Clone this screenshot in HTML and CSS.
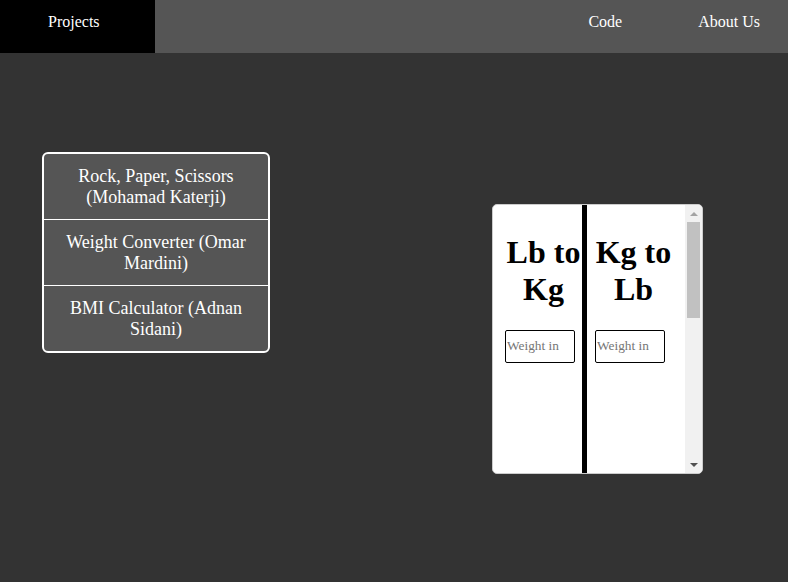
FILE: index.html
```html
<!DOCTYPE html>
<html lang="en">
<head>
<meta charset="utf-8">
<title>Projects</title>
<link rel="stylesheet" href="styles.css">
</head>
<body>
<nav class="nav">
  <a class="nav-item nav-active" href="#">Projects</a>
  <a class="nav-item nav-code" href="#">Code</a>
  <a class="nav-item nav-about" href="#">About Us</a>
</nav>
<main class="main">
  <div class="project-list">
    <a class="project" href="#">Rock, Paper, Scissors (Mohamad Katerji)</a>
    <a class="project" href="#">Weight Converter (Omar Mardini)</a>
    <a class="project" href="#">BMI Calculator (Adnan Sidani)</a>
  </div>
  <div class="converter">
    <div class="conv-view">
      <div class="conv-col conv-left">
        <h1 class="conv-title">Lb to Kg</h1>
        <input class="conv-input" type="text" placeholder="Weight in">
      </div>
      <div class="conv-col conv-right">
        <h1 class="conv-title">Kg to Lb</h1>
        <input class="conv-input" type="text" placeholder="Weight in">
      </div>
    </div>
    <div class="scrollbar">
      <div class="sb-button"><span class="sb-arrow-up"></span></div>
      <div class="sb-track"><div class="sb-thumb"></div></div>
      <div class="sb-button"><span class="sb-arrow-down"></span></div>
    </div>
  </div>
</main>
</body>
</html>
```
FILE: styles.css
```css
html, body {
  margin: 0;
  padding: 0;
}
body {
  background: #333333;
  font-family: "Liberation Serif", "Times New Roman", serif;
  width: 788px;
  height: 582px;
  overflow: hidden;
}
.nav {
  display: flex;
  height: 53px;
  background: #555555;
}
.nav-item {
  display: block;
  color: #ffffff;
  text-decoration: none;
  font-size: 16px;
  line-height: 18.4px;
  padding-top: 13px;
  box-sizing: border-box;
  height: 53px;
}
.nav-active {
  background: #000000;
  width: 155px;
  padding-left: 48px;
}
.nav-code {
  margin-left: auto;
  padding-left: 38px;
  padding-right: 38px;
}
.nav-about {
  padding-left: 38px;
  padding-right: 28px;
}
.main {
  display: flex;
  align-items: flex-start;
  padding: 99px 0 0 42px;
}
.project-list {
  width: 224px;
  border: 2px solid #ffffff;
  border-radius: 6px;
  background: #555555;
  display: flex;
  flex-direction: column;
  overflow: hidden;
}
.project {
  display: block;
  color: #ffffff;
  text-decoration: none;
  text-align: center;
  font-size: 18px;
  line-height: 20.5px;
  padding: 12px 8px;
}
.project + .project {
  border-top: 1px solid #ffffff;
}
.converter {
  margin-left: 222px;
  margin-top: 52px;
  width: 209px;
  height: 268px;
  border: 1px solid #cccccc;
  border-radius: 5px;
  background: #ffffff;
  overflow: hidden;
  display: flex;
  align-items: stretch;
}
.conv-view {
  width: 192px;
  height: 268px;
  overflow: hidden;
  display: flex;
  align-items: stretch;
  flex: none;
}
.conv-col {
  box-sizing: border-box;
  height: 653px;
  padding-top: 8px;
  flex: none;
}
.conv-left {
  width: 94px;
  padding-left: 12px;
  border-right: 5px solid #000000;
}
.conv-right {
  width: 85px;
  padding-left: 8px;
}
.conv-title {
  font-size: 32px;
  font-weight: bold;
  text-align: center;
  margin: 21.44px 0;
  color: #000000;
}
.conv-input {
  display: block;
  box-sizing: border-box;
  width: 70px;
  height: 33px;
  margin: 0;
  padding: 0 1px;
  border: 1px solid #000000;
  border-radius: 2px;
  font-family: "Liberation Serif", "Times New Roman", serif;
  font-size: 13.33px;
  background: #ffffff;
}
.conv-input::placeholder {
  color: #757575;
}
.scrollbar {
  width: 17px;
  flex: none;
  background: #f1f1f1;
  display: flex;
  flex-direction: column;
}
.sb-button {
  height: 17px;
  flex: none;
  display: flex;
  align-items: center;
  justify-content: center;
}
.sb-arrow-up {
  width: 0;
  height: 0;
  border-left: 4px solid transparent;
  border-right: 4px solid transparent;
  border-bottom: 4px solid #a3a3a3;
}
.sb-arrow-down {
  width: 0;
  height: 0;
  border-left: 4px solid transparent;
  border-right: 4px solid transparent;
  border-top: 4px solid #505050;
}
.sb-track {
  flex: 1;
  display: flex;
  flex-direction: column;
}
.sb-thumb {
  height: 96px;
  margin: 0 2px;
  background: #c1c1c1;
}
```
